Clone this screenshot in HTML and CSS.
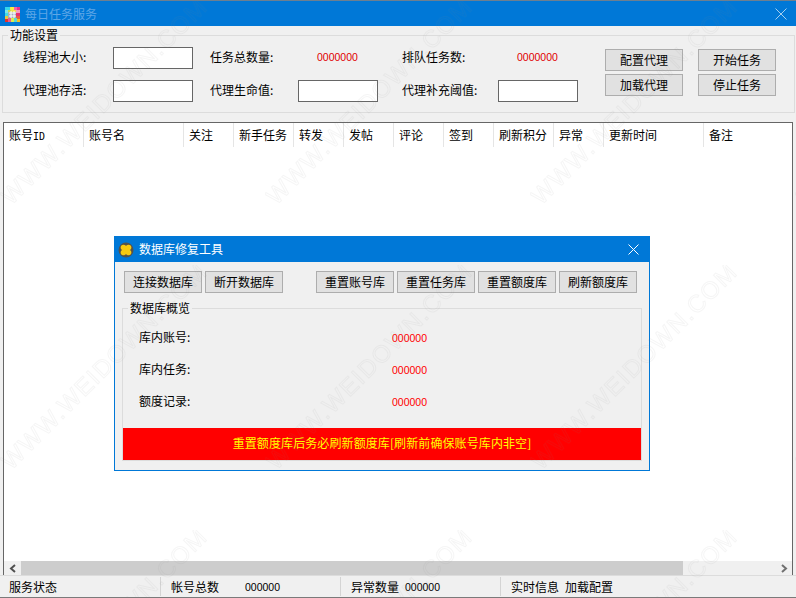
FILE: index.html
```html
<!DOCTYPE html>
<html lang="zh">
<head>
<meta charset="utf-8">
<title>每日任务服务</title>
<link rel="stylesheet" href="styles.css">
</head>
<body>
<div class="win">
  <header class="titlebar inactive">
    <svg class="appicon" width="15" height="15" viewBox="0 0 15 15">
      <rect width="15" height="15" fill="#f0e44c"/>
      <rect width="5" height="3" fill="#35d6ea"/>
      <rect x="0" y="3" width="3" height="3" fill="#7fe3e8"/>
      <rect x="3" y="3" width="3" height="2" fill="#c8d84a"/>
      <rect x="6" y="0" width="3" height="3" fill="#f8ee40"/>
      <rect x="9" y="0" width="3" height="3" fill="#f060b0"/>
      <rect x="12" y="0" width="3" height="3" fill="#e8328c"/>
      <rect x="11" y="3" width="4" height="3" fill="#f4a0c0"/>
      <rect x="0" y="6" width="3" height="3" fill="#40dce8"/>
      <rect x="3" y="5" width="8" height="6" fill="#a6b0bc"/>
      <rect x="11" y="6" width="4" height="3" fill="#e83070"/>
      <rect x="0" y="9" width="3" height="3" fill="#e8c840"/>
      <rect x="11" y="9" width="4" height="3" fill="#e86040"/>
      <rect x="0" y="12" width="3" height="3" fill="#e8322a"/>
      <rect x="3" y="11" width="3" height="4" fill="#e85a90"/>
      <rect x="6" y="11" width="3" height="4" fill="#d8ee50"/>
      <rect x="9" y="11" width="3" height="4" fill="#58d8d0"/>
      <rect x="12" y="12" width="3" height="3" fill="#f2c020"/>
      <path d="M6 4v7M9 4v7M4 6h7M4 9h7" stroke="#fff" stroke-width="1" fill="none"/>
    </svg>
    <span class="titletext">每日任务服务</span>
    <svg class="close" width="12" height="12" viewBox="0 0 12 12"><path d="M.5.5l11 11M11.500.5l-11 11" stroke="currentColor" fill="none"/></svg>
  </header>

  <fieldset class="group main-group">
    <legend>功能设置</legend>
    <div class="form">
      <div class="form-grid">
        <label>线程池大小:</label><span class="input"></span>
        <label class="col2">任务总数量:</label><span class="value">0000000</span>
        <label class="col3">排队任务数:</label><span class="value">0000000</span>
        <label>代理池存活:</label><span class="input"></span>
        <label class="col2">代理生命值:</label><span class="input"></span>
        <label class="col3">代理补充阈值:</label><span class="input"></span>
      </div>
      <div class="actions">
        <button class="btn">配置代理</button>
        <button class="btn">开始任务</button>
        <button class="btn">加载代理</button>
        <button class="btn">停止任务</button>
      </div>
    </div>
  </fieldset>

  <section class="table">
    <div class="thead">
      <div class="th w80">账号<span class="latin">ID</span></div>
      <div class="th w100">账号名</div>
      <div class="th w50">关注</div>
      <div class="th w60">新手任务</div>
      <div class="th w50">转发</div>
      <div class="th w50">发帖</div>
      <div class="th w50">评论</div>
      <div class="th w50">签到</div>
      <div class="th w60">刷新积分</div>
      <div class="th w50">异常</div>
      <div class="th w100">更新时间</div>
      <div class="th last">备注</div>
    </div>
    <div class="tbody"></div>
    <div class="scrollbar">
      <div class="arrow"><svg width="8" height="9" viewBox="0 0 8 9"><path d="M6 1L2 4.500l4 3.500" stroke="#505050" stroke-width="2" fill="none"/></svg></div>
      <div class="thumb"></div>
      <div class="track"></div>
      <div class="arrow"><svg width="8" height="9" viewBox="0 0 8 9"><path d="M2 1l4 3.500L2 8" stroke="#707070" stroke-width="2" fill="none"/></svg></div>
    </div>
  </section>

  <footer class="status">
    <div class="cell s1">服务状态</div>
    <div class="cell s2"><span class="key">帐号总数</span><span class="num">000000</span></div>
    <div class="cell s3"><span class="key">异常数量</span><span class="num">000000</span></div>
    <div class="cell s4"><span class="key">实时信息</span><span>加载配置</span></div>
  </footer>

  <div class="dialog">
    <header class="titlebar dlg-title">
      <svg class="dlgicon" width="16" height="16" viewBox="0 0 16 16">
        <circle cx="8" cy="8" r="7.500" fill="#55524a"/>
        <rect x="4" y="4" width="8" height="8" fill="#f7c90f"/>
        <circle cx="5.500" cy="5.500" r="2.800" fill="#f7c90f"/><circle cx="10.500" cy="5.500" r="2.800" fill="#f7c90f"/>
        <circle cx="5.500" cy="10.500" r="2.800" fill="#f7c90f"/><circle cx="10.500" cy="10.500" r="2.800" fill="#f7c90f"/>
      </svg>
      <span class="titletext">数据库修复工具</span>
      <svg class="close" width="11" height="11" viewBox="0 0 11 11"><path d="M.5.5l10 10M10.500.5l-10 10" stroke="currentColor" fill="none"/></svg>
    </header>
    <div class="dlg-body">
      <div class="dlg-actions">
        <button class="btn">连接数据库</button>
        <button class="btn">断开数据库</button>
        <button class="btn push">重置账号库</button>
        <button class="btn">重置任务库</button>
        <button class="btn">重置额度库</button>
        <button class="btn">刷新额度库</button>
      </div>
      <fieldset class="group dlg-group">
        <legend>数据库概览</legend>
        <div class="rows">
          <div class="row"><label>库内账号:</label><span class="value">000000</span></div>
          <div class="row"><label>库内任务:</label><span class="value">000000</span></div>
          <div class="row"><label>额度记录:</label><span class="value">000000</span></div>
        </div>
        <div class="warning">重置额度库后务必刷新额度库[刷新前确保账号库内非空]</div>
      </fieldset>
    </div>
  </div>

  <svg class="watermark" width="796" height="598" aria-hidden="true">
    <defs>
      <pattern id="wm" width="265" height="265" patternUnits="userSpaceOnUse">
        <text class="wm-text" transform="translate(110 107) rotate(-45)" text-anchor="middle">WWW.WEIDOWN.COM</text>
      </pattern>
    </defs>
    <rect width="796" height="598" fill="url(#wm)"/>
  </svg>
</div>
</body>
</html>
```
FILE: styles.css
```css
* { box-sizing: border-box; }
html, body { margin: 0; padding: 0; }
body {
  font-family: "Noto Sans CJK SC", "Liberation Sans", sans-serif;
  font-size: 12px;
  color: #000;
  background: #f0f0f0;
}
.win {
  position: relative;
  width: 796px;
  height: 598px;
  display: flex;
  flex-direction: column;
  background: #f0f0f0;
  border-top: 1px solid #6d7f90;
  border-bottom: 1px solid #7a7a7a;
  overflow: hidden;
}
.titlebar {
  flex: none;
  display: flex;
  align-items: center;
  height: 25px;
  background: #0078d7;
  color: #fff;
}
.titlebar.inactive { color: #5ea6e6; padding: 0 9px 0 5px; }
.appicon { margin-right: 5px; margin-top: 1px; }
.titletext { line-height: 16px; }
.close { margin-left: auto; }
.inactive .close { color: #a5cfee; }

.group {
  margin: 0;
  padding: 0;
  min-width: 0;
  border: 1px solid #dcdcdc;
}
.group legend {
  padding: 0 2px;
  line-height: 16px;
  height: 16px;
}
.main-group {
  flex: none;
  width: 793px;
  height: 86px;
  margin-left: 2px;
  margin-top: 1px;
}
.main-group legend { margin-left: 5px; }
.form {
  display: flex;
  padding: 4px 0 0 20px;
}
.form-grid {
  flex: none;
  display: grid;
  grid-template-columns: 90px 80px 105px 80px 120px 80px;
  grid-auto-rows: 22px;
  row-gap: 11px;
}
.form-grid label { line-height: 20px; white-space: nowrap; }
.form-grid .col2 { margin-left: 17px; }
.form-grid .col3 { margin-left: 24px; }
.input {
  display: block;
  height: 22px;
  background: #fff;
  border: 1px solid #666;
}
.value {
  font-family: "Liberation Sans", sans-serif;
  font-size: 10.5px;
  color: #e00000;
  line-height: 20px;
}
.form-grid .value { padding-left: 19px; }
.actions {
  flex: none;
  display: grid;
  grid-template-columns: 78px 78px;
  grid-auto-rows: 22px;
  column-gap: 15px;
  row-gap: 3px;
  margin: 2px 0 0 27px;
}
.btn {
  flex: none;
  height: 22px;
  width: 78px;
  padding: 0;
  background: #e1e1e1;
  border: 1px solid #adadad;
  font: inherit;
  color: #000;
  line-height: 20px;
  white-space: nowrap;
}

.table {
  flex: 1;
  min-height: 0;
  margin: 9px 3px 0 3px;
  display: flex;
  flex-direction: column;
  background: #fff;
  border-top: 1px solid #666;
  border-left: 1px solid #666;
  border-right: 1px solid #666;
}
.thead { flex: none; display: flex; height: 24px; }
.th {
  flex: none;
  padding-left: 5px;
  line-height: 24px;
  border-right: 1px solid #e5e5e5;
  white-space: nowrap;
}
.w50 { width: 50px; }
.w60 { width: 60px; }
.w80 { width: 80px; }
.w100 { width: 100px; }
.last { flex: 1; border-right: 0; }
.latin { font-family: "DejaVu Sans Mono", monospace; font-size: 10px; }
.tbody { flex: 1; min-height: 0; }
.scrollbar { flex: none; display: flex; height: 14px; background: #f0f0f0; }
.arrow {
  flex: none;
  width: 17px;
  display: flex;
  align-items: center;
  justify-content: center;
}
.thumb { flex: none; width: 662px; background: #cdcdcd; }
.track { flex: 1; }

.status {
  flex: none;
  display: flex;
  height: 22px;
  background: #f0f0f0;
  border-top: 1px solid #dcdcdc;
  align-items: stretch;
}
.cell {
  flex: none;
  display: flex;
  align-items: center;
  padding-left: 9px;
  border-right: 1px solid #d4d4d4;
  margin: 1px 0;
}
.s1 { width: 161px; }
.s2 { width: 180px; padding-left: 10px; }
.s3 { width: 160px; padding-left: 10px; }
.s4 { flex: 1; padding-left: 10px; border-right: 0; }
.key { margin-right: 6px; }
.s2 .key { margin-right: 26px; }
.num {
  font-family: "Liberation Sans", sans-serif;
  font-size: 10.5px;
}

.dialog {
  position: absolute;
  left: 114px;
  top: 235px;
  width: 536px;
  height: 235px;
  display: flex;
  flex-direction: column;
  background: #f0f0f0;
  border: 1px solid #0078d7;
}
.dlg-title { padding: 0 10px 0 3px; }
.dlg-title .dlgicon { margin-right: 5px; }
.dlg-title .titletext { margin-top: -1px; }
.dlg-body { flex: 1; padding: 9px 7px 0 7px; }
.dlg-actions { display: flex; gap: 3px; padding-left: 2px; }
.push { margin-left: 30px; }
.dlg-group { margin-top: 7px; height: 161px; }
.dlg-group legend { margin-left: 5px; }
.rows { padding-top: 6px; }
.row { display: flex; height: 32px; align-items: center; padding-left: 16px; }
.row label { width: 253px; line-height: 14px; margin-top: -2px; }
.warning {
  margin-top: 10px;
  height: 32px;
  background: #f00;
  color: #ff0;
  text-align: center;
  line-height: 30px;
  letter-spacing: .1px;
}
.row .value { color: #f00; }

.watermark {
  position: absolute;
  left: 0;
  top: -1px;
  pointer-events: none;
}
.wm-text {
  font-family: "Liberation Sans", sans-serif;
  font-size: 24px;
  letter-spacing: 1.5px;
  fill: none;
  stroke: #808080;
  stroke-width: 1;
  stroke-opacity: .08;
}
```
